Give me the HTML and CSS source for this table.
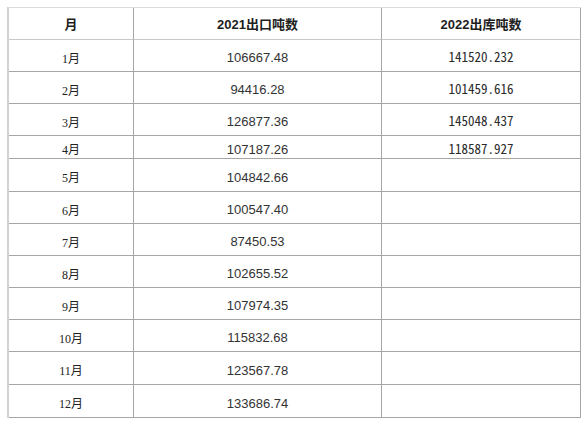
FILE: index.html
```html
<!DOCTYPE html>
<html lang="zh">
<head>
<meta charset="utf-8">
<link rel="stylesheet" href="styles.css">
</head>
<body>
<table class="data">
  <colgroup>
    <col class="c-month">
    <col class="c-2021">
    <col class="c-2022">
  </colgroup>
  <thead>
    <tr class="r32">
      <th class="head">月</th>
      <th class="head">2021出口吨数</th>
      <th class="head">2022出库吨数</th>
    </tr>
  </thead>
  <tbody>
    <tr class="r32"><td class="month">1月</td><td class="v21">106667.48</td><td class="v22">141520.232</td></tr>
    <tr class="r32"><td class="month">2月</td><td class="v21">94416.28</td><td class="v22">101459.616</td></tr>
    <tr class="r32"><td class="month">3月</td><td class="v21">126877.36</td><td class="v22">145048.437</td></tr>
    <tr class="r23"><td class="month">4月</td><td class="v21">107187.26</td><td class="v22">118587.927</td></tr>
    <tr class="r33"><td class="month">5月</td><td class="v21">104842.66</td><td class="v22"></td></tr>
    <tr class="r32"><td class="month">6月</td><td class="v21">100547.40</td><td class="v22"></td></tr>
    <tr class="r32"><td class="month">7月</td><td class="v21">87450.53</td><td class="v22"></td></tr>
    <tr class="r32"><td class="month">8月</td><td class="v21">102655.52</td><td class="v22"></td></tr>
    <tr class="r32"><td class="month">9月</td><td class="v21">107974.35</td><td class="v22"></td></tr>
    <tr class="r32"><td class="month">10月</td><td class="v21">115832.68</td><td class="v22"></td></tr>
    <tr class="r33"><td class="month">11月</td><td class="v21">123567.78</td><td class="v22"></td></tr>
    <tr class="r33"><td class="month">12月</td><td class="v21">133686.74</td><td class="v22"></td></tr>
  </tbody>
</table>
</body>
</html>
```

FILE: styles.css
```css
html, body {
  margin: 0;
  padding: 0;
  background: #ffffff;
}

body {
  font-family: "Liberation Sans", "Noto Sans CJK SC", sans-serif;
  color: #222222;
}

.data {
  margin: 7px 0 0 7px;
  border-collapse: separate;
  border-spacing: 0;
  table-layout: fixed;
  width: 574px;
  border-top: 1px solid #dcdcdc;
  border-left: 2px solid #d2d2d2;
}

.c-month { width: 125px; }
.c-2021 { width: 248px; }
.c-2022 { width: 199px; }

.data th,
.data td {
  box-sizing: border-box;
  padding: 0;
  border-right: 1px solid #a6a6a6;
  border-bottom: 1px solid #a6a6a6;
  text-align: center;
  vertical-align: middle;
  line-height: 16px;
}

.data thead th {
  border-bottom-color: #c8c8c8;
}

.r32 > * { height: 32px; }
.r33 > * { height: 33px; }
.r23 > * { height: 23px; }

.data .head {
  font-family: "Liberation Sans", "Noto Sans CJK SC", sans-serif;
  font-weight: bold;
  font-size: 13px;
  color: #1e1e1e;
  padding-top: 3px;
}

.data .month {
  font-family: "Liberation Serif", "Noto Sans CJK SC", serif;
  font-size: 12px;
  color: #222222;
  padding-top: 6px;
}

.data .v21 {
  font-family: "Liberation Sans", sans-serif;
  font-size: 13px;
  color: #333333;
  padding-top: 5px;
}

.data .v22 {
  font-family: "Noto Sans Mono CJK SC", "Liberation Mono", monospace;
  font-size: 13px;
  color: #2a2a2a;
  padding-top: 3px;
}
```
